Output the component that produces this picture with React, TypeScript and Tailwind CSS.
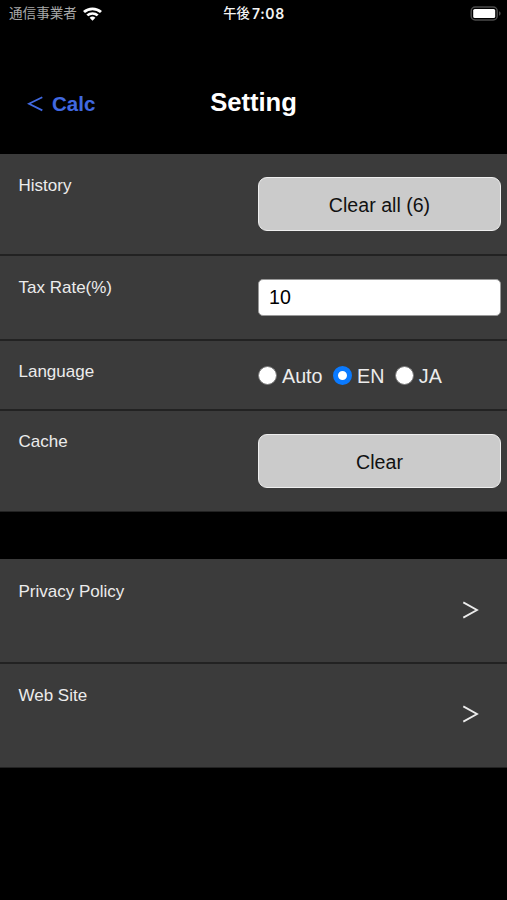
import { useState, type ReactNode } from "react";
import clsx from "clsx";

const languages = ["Auto", "EN", "JA"];

function StatusBar() {
  return (
    <div className="flex h-[27px] items-center justify-between pl-[9px] pr-[5px] font-['Liberation_Sans','Noto_Sans_CJK_JP',sans-serif]">
      <div className="flex w-[200px] items-center gap-[6px]">
        <span className="text-[13.6px] leading-5 text-[#a8a8a8] whitespace-nowrap">通信事業者</span>
        <svg width="19" height="14" viewBox="0 0 19 15" preserveAspectRatio="none" fill="none" stroke="#fff" strokeWidth="2.8">
          <path d="M1 5.4a12.2 12.2 0 0 1 17 0" />
          <path d="M4.3 9a7.5 7.5 0 0 1 10.4 0" />
          <path d="M9.5 14.8 6.6 11.6a4.2 4.2 0 0 1 5.8 0z" fill="#fff" stroke="none" />
        </svg>
      </div>
      <div className="flex items-center gap-[2.5px] pr-[3px] text-[13.2px] leading-5 font-bold text-[#f4f4f4] whitespace-nowrap">
        <span className="font-medium">午後</span>
        <span className="font-['Inter',sans-serif] text-[14px] font-semibold tracking-[0.6px]">7:08</span>
      </div>
      <div className="flex w-[200px] justify-end">
        <svg width="32" height="15" viewBox="0 0 32 15" fill="none">
          <rect x="1.2" y="1" width="26" height="13" rx="4" stroke="#4b4b4b" strokeWidth="1.5" />
          <rect x="3.2" y="3" width="22" height="9" rx="1.6" fill="#fff" />
          <path d="M29 5.3c2.2.8 2.2 3.6 0 4.4z" fill="#4b4b4b" />
        </svg>
      </div>
    </div>
  );
}

function Row({ label, className, children }: { label: string; className: string; children: ReactNode }) {
  return (
    <div className={clsx("flex border-[#222] bg-[#3b3b3b]", className)}>
      <div className="w-[257px] shrink-0 pl-[18.5px] text-[17px] leading-6 text-[#ececec]">{label}</div>
      {children}
    </div>
  );
}

function ClearButton({ children }: { children: ReactNode }) {
  return (
    <button className="ml-[1px] h-[54px] w-[243px] rounded-[9px] border-[1.5px] border-[#eee] bg-[#cbcbcb] pt-[3px] text-[19.6px] text-[#111]">
      {children}
    </button>
  );
}

function LinkArrow() {
  return (
    <svg className="mt-[21px] ml-[205px]" width="17" height="18" viewBox="0 0 17 18" fill="none" stroke="#ececec" strokeWidth="1.8">
      <path d="M1.3 1.4 15 9 1.3 16.6" />
    </svg>
  );
}

export default function App() {
  const [taxRate, setTaxRate] = useState("10");
  const [language, setLanguage] = useState("EN");

  return (
    <div className="h-screen w-full overflow-hidden bg-black font-['Liberation_Sans',Arial,sans-serif]">
      <StatusBar />

      <header className="grid h-[127px] grid-cols-3 items-start pt-[57px]">
        <button className="mt-[2px] flex h-9 items-center gap-[9px] pl-[27px] text-[20.5px] font-bold text-[#4169e1]">
          <svg className="-mt-px" width="16" height="16" viewBox="0 0 16 16" fill="none" stroke="currentColor" strokeWidth="1.8">
            <path d="M15.3 1.2 2 7.8l13.3 6.6" />
          </svg>
          Calc
        </button>
        <h1 className="text-center text-[25.6px] leading-9 font-bold text-white">Setting</h1>
      </header>

      <section>
        <Row label="History" className="h-[102px] items-start border-b-2 pt-5">
          <div className="pt-[3px]">
            <ClearButton>Clear all (6)</ClearButton>
          </div>
        </Row>
        <Row label="Tax Rate(%)" className="h-[85px] items-start border-b-2 pt-5">
          <input
            className="mt-[3px] ml-[1px] h-[37px] w-[243px] rounded-[5px] border border-[#999] bg-white px-[10px] text-[19.6px] text-black"
            value={taxRate}
            onChange={(e) => setTaxRate(e.target.value)}
          />
        </Row>
        <Row label="Language" className="h-[70px] items-start border-b-2 pt-[19px]">
          <div className="mt-[3px] ml-[1px] flex h-6 gap-[10.5px]">
            {languages.map((item) => (
              <button
                key={item}
                className="flex items-center gap-[5px] text-[19.7px] leading-6 text-[#ececec]"
                onClick={() => setLanguage(item)}
              >
                <span
                  className={clsx(
                    "size-[19px] rounded-full bg-white",
                    language === item ? "border-[5.5px] border-[#0a7aff]" : "border border-[#777]",
                  )}
                />
                <span className="pt-px">{item}</span>
              </button>
            ))}
          </div>
        </Row>
        <Row label="Cache" className="h-[101px] items-start border-b pt-[19px]">
          <div className="pt-[4px]">
            <ClearButton>Clear</ClearButton>
          </div>
        </Row>
      </section>

      <section className="mt-[47px]">
        <Row label="Privacy Policy" className="h-[105px] items-start border-b-2 pt-[21px]">
          <LinkArrow />
        </Row>
        <Row label="Web Site" className="h-[104px] items-start border-b pt-5">
          <LinkArrow />
        </Row>
      </section>
    </div>
  );
}
